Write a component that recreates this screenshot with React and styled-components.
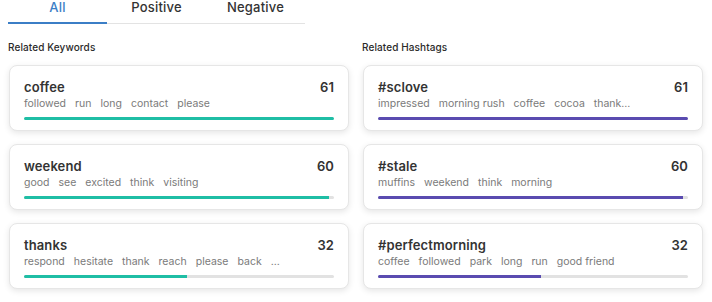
import React from "react";
import styled, { createGlobalStyle } from "styled-components";

const GlobalStyle = createGlobalStyle`
  body {
    margin: 0;
    background: #ffffff;
    font-family: Inter, "Noto Sans", "Liberation Sans", sans-serif;
    color: #333;
  }
`;

const Page = styled.div`
  padding: 0 8px 8px;
`;

const Tabs = styled.div`
  display: flex;
  width: 297px;
  margin-top: -6px;
  border-bottom: 1px solid #e3e3e3;
`;

const Tab = styled.div`
  width: 99px;
  height: 30px;
  box-sizing: border-box;
  display: flex;
  align-items: center;
  justify-content: center;
  font-size: 13px;
  font-weight: 500;
  letter-spacing: 0.2px;
  color: ${(p) => (p.active ? "#3b7ec6" : "#333")};
  border-bottom: 2px solid ${(p) => (p.active ? "#3b7ec6" : "transparent")};
  margin-bottom: -1px;
  padding-bottom: 2px;
`;

const Columns = styled.div`
  display: grid;
  grid-template-columns: 341px 341px;
  column-gap: 13px;
  margin-top: 16px;
`;

const Column = styled.div`
  display: flex;
  flex-direction: column;
`;

const Heading = styled.div`
  font-size: 10px;
  font-weight: 500;
  color: #2a2a2a;
  letter-spacing: 0.1px;
  margin-bottom: 11px;
  line-height: 14px;
`;

const CardList = styled.div`
  display: flex;
  flex-direction: column;
  gap: 13px;
  padding-left: 1px;
`;

const Card = styled.div`
  box-sizing: border-box;
  height: 66px;
  width: 340px;
  border-radius: 8px;
  border: 1px solid #e6e6e6;
  background: #fff;
  box-shadow: 0 2px 6px rgba(0, 0, 0, 0.1);
  padding: 12px 14px 0;
  display: flex;
  flex-direction: column;
`;

const TopRow = styled.div`
  display: flex;
  justify-content: space-between;
  align-items: center;
  font-size: 13px;
  font-weight: 600;
  color: #333;
  letter-spacing: 0.1px;
  line-height: 18px;
`;

const Words = styled.div`
  display: flex;
  gap: 9px;
  font-size: 10.5px;
  color: #7a7a7a;
  line-height: 14px;
  margin-top: 1px;
  white-space: nowrap;
`;

const Track = styled.div`
  margin-top: 6px;
  height: 2.5px;
  border-radius: 2px;
  background: #e2e2e2;
  overflow: hidden;
`;

const Fill = styled.div`
  height: 100%;
  background: ${(p) => p.color};
`;

const keywords = [
  { name: "coffee", count: 61, words: ["followed", "run", "long", "contact", "please"] },
  { name: "weekend", count: 60, words: ["good", "see", "excited", "think", "visiting"] },
  { name: "thanks", count: 32, words: ["respond", "hesitate", "thank", "reach", "please", "back", "..."] },
];

const hashtags = [
  { name: "#sclove", count: 61, words: ["impressed", "morning rush", "coffee", "cocoa", "thank..."] },
  { name: "#stale", count: 60, words: ["muffins", "weekend", "think", "morning"] },
  { name: "#perfectmorning", count: 32, words: ["coffee", "followed", "park", "long", "run", "good friend"] },
];

function ItemCard({ item, color, max }) {
  return (
    <Card>
      <TopRow>
        <span>{item.name}</span>
        <span>{item.count}</span>
      </TopRow>
      <Words>
        {item.words.map((w, i) => (
          <span key={i}>{w}</span>
        ))}
      </Words>
      <Track>
        <Fill color={color} style={{ width: `${(item.count / max) * 100}%` }} />
      </Track>
    </Card>
  );
}

export default function App() {
  return (
    <>
      <GlobalStyle />
      <Page>
        <Tabs>
          <Tab active>All</Tab>
          <Tab>Positive</Tab>
          <Tab>Negative</Tab>
        </Tabs>
        <Columns>
          <Column>
            <Heading>Related Keywords</Heading>
            <CardList>
              {keywords.map((k) => (
                <ItemCard key={k.name} item={k} color="#1fbea5" max={61} />
              ))}
            </CardList>
          </Column>
          <Column>
            <Heading>Related Hashtags</Heading>
            <CardList>
              {hashtags.map((k) => (
                <ItemCard key={k.name} item={k} color="#5a4bb0" max={61} />
              ))}
            </CardList>
          </Column>
        </Columns>
      </Page>
    </>
  );
}
